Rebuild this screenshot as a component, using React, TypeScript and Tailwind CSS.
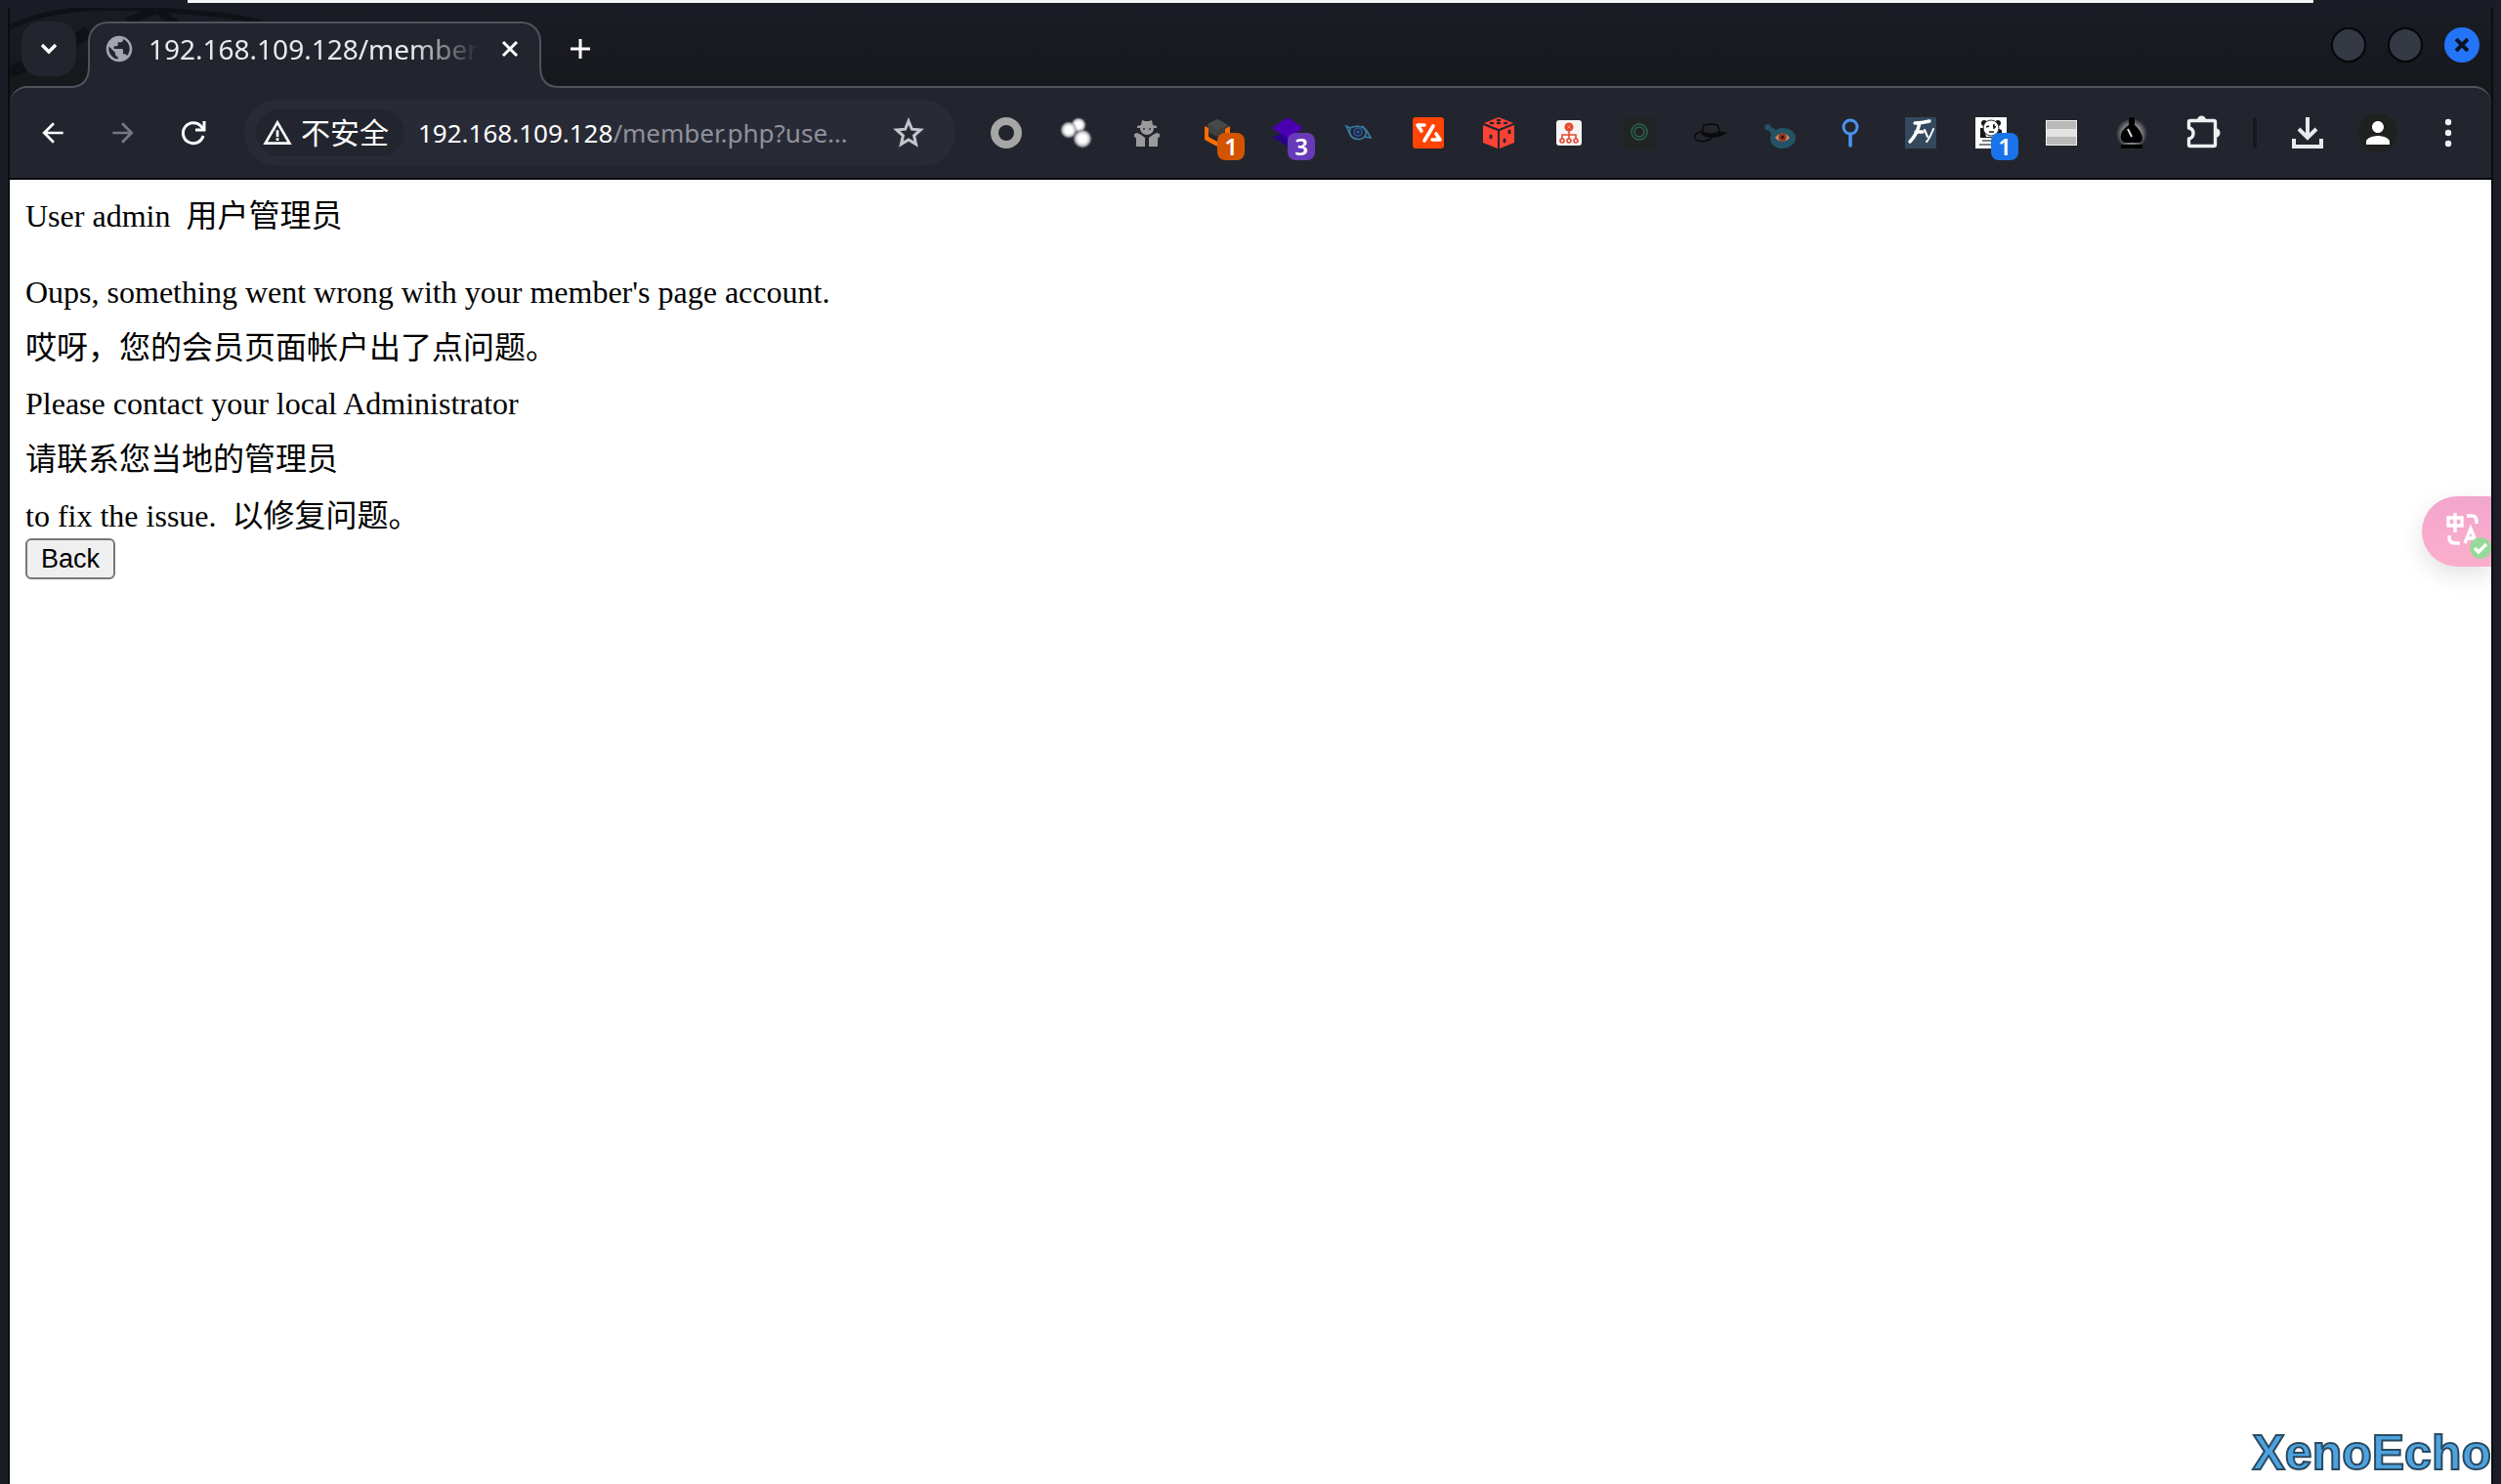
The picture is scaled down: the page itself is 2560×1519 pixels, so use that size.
import { FC, ReactNode } from 'react'
import {
    MdArrowBack,
    MdArrowForward,
    MdPerson,
    MdPublic,
    MdWarningAmber,
} from 'react-icons/md'

type Extension = {
    name: string
    icon: ReactNode
    badge?: string
    badgeClass?: string
}

const extensions: Extension[] = [
    {
        name: 'Ring',
        icon: <circle cx="16" cy="16" r="12" fill="none" stroke="#a6a6a6" strokeWidth="8" />,
    },
    {
        name: 'Bubbles',
        icon: (
            <>
                <defs>
                    <radialGradient id="bubble">
                        <stop offset="0.4" stopColor="#fff" />
                        <stop offset="0.7" stopColor="#c4c5c7" />
                        <stop offset="1" stopColor="#8a8b90" stopOpacity="0.1" />
                    </radialGradient>
                </defs>
                <circle cx="18" cy="8" r="8" fill="url(#bubble)" />
                <circle cx="8" cy="13" r="9" fill="url(#bubble)" />
                <circle cx="22" cy="22" r="10" fill="url(#bubble)" />
            </>
        ),
    },
    {
        name: 'Agent',
        icon: (
            <g fill="#9b9b9b">
                <path d="M11 3l3 1h4l3-1 1 5 4 1v2h-3c0 4-3 7-7 7s-7-3-7-7H6V9l4-1z" />
                <path d="M5 30v-8l-1-2-1 1v-4l3-1 4 2 4 3v9zM27 30v-8l1-2 1 1v-4l-3-1-4 2-4 3v9z" />
                <path d="M12 11h2v2h-2zM18 11h2v2h-2z" fill="#4a4b50" />
            </g>
        ),
    },
    {
        name: 'Cube',
        badge: '1',
        badgeClass: 'bg-[#d35400]',
        icon: (
            <>
                <path d="M16 2l11 6-3 8-8 4-10-5V7z" fill="#3f4040" />
                <path d="M16 2l11 6-11 5-10-6z" fill="#484a49" />
                <path d="M3 9l4 2v9l9 5v5L3 23zM29 9l-5 3v5h5z" fill="#ff6c00" />
            </>
        ),
    },
    {
        name: 'Layers',
        badge: '3',
        badgeClass: 'bg-[#673ab7]',
        icon: (
            <>
                <path d="M4 19l12-3 14 4-14 10L0 20z" fill="#2b0189" />
                <path d="M16 0l16 11-16 11L0 11z" fill="#4a00b0" />
            </>
        ),
    },
    {
        name: 'Eye',
        icon: (
            <g fill="none" stroke="#357ca5" strokeWidth="1.6">
                <path d="M4 9l4 2c5-3 14-2 17 3l4 7-6-1c-4 4-12 3-15-2z" />
                <circle cx="16" cy="15" r="4" stroke="#29569a" />
                <circle cx="16" cy="15" r="1" stroke="#29569a" />
                <path d="M8 11c-2 5 1 10 5 11M20 9c5 3 5 8 3 11" />
            </g>
        ),
    },
    {
        name: 'Code',
        icon: (
            <>
                <rect width="32" height="32" rx="3" fill="#ff4405" />
                <path
                    d="M12 8H5l4 6M21 9L12 24M24 17l4 6h-8"
                    fill="none"
                    stroke="#fff"
                    strokeWidth="3.6"
                    strokeLinejoin="round"
                    strokeLinecap="round"
                />
            </>
        ),
    },
    {
        name: 'Dice',
        icon: (
            <>
                <path d="M16 0l15 6-15 6L1 6zM0 8l15 6v18L0 26zM32 8l-15 6v18l15-6z" fill="#fb4234" />
                <g fill="#23252e">
                    <ellipse cx="16" cy="3" rx="2.4" ry="1.2" />
                    <ellipse cx="9" cy="6" rx="2.4" ry="1.2" />
                    <ellipse cx="16" cy="6" rx="2.4" ry="1.2" />
                    <ellipse cx="23" cy="6" rx="2.4" ry="1.2" />
                    <ellipse cx="8" cy="20" rx="1.6" ry="2.4" />
                    <ellipse cx="27" cy="15" rx="1.6" ry="2.4" />
                    <ellipse cx="22" cy="24" rx="1.6" ry="2.4" />
                </g>
            </>
        ),
    },
    {
        name: 'Sitemap',
        icon: (
            <>
                <rect x="3" y="3" width="26" height="26" rx="3" fill="#f5f5f5" />
                <g fill="none" stroke="#e8472b" strokeWidth="1.6">
                    <circle cx="16" cy="10" r="3.4" strokeWidth="2.4" />
                    <path d="M16 14v8M9 22v-4h14v4M14 10l2-2 2 2-2 2z" />
                    <circle cx="9" cy="24" r="2" />
                    <circle cx="16" cy="24" r="2" />
                    <circle cx="23" cy="24" r="2" />
                </g>
            </>
        ),
    },
    {
        name: 'Target',
        icon: (
            <>
                <rect width="32" height="32" rx="2" fill="#212423" />
                <g fill="none" stroke="#2c6455" strokeWidth="1.4">
                    <circle cx="16" cy="15" r="8" />
                    <circle cx="16" cy="15" r="5" />
                </g>
            </>
        ),
    },
    {
        name: 'Hat',
        icon: (
            <g stroke="#0b0b0d" strokeWidth="1.6">
                <path d="M8 17l2-9c4-1 10-1 14 0l3 8" fill="#24262c" />
                <path d="M8 15c6 3 12 3 18 0l6 1c-4 3-10 4-15 4-4 0-8-1-9-5z" fill="#0b0b0d" />
                <path d="M8 15c-5 0-8 3-7 6 2 5 10 5 18 0" fill="none" />
            </g>
        ),
    },
    {
        name: 'Creature',
        icon: (
            <>
                <path
                    d="M1 8c2-2 5-1 6 2l5 3c6-4 18-2 20 7 1 8-8 12-14 12C9 32 4 25 7 17l-2-3c-3 0-6-3-4-6z"
                    fill="#235365"
                />
                <path d="M11 21c4-6 11-6 15 0-4 5-11 5-15 0z" fill="#c98763" />
                <circle cx="18.5" cy="20.5" r="4" fill="#91321d" />
                <circle cx="18.5" cy="20.5" r="1.4" fill="#1d1210" />
            </>
        ),
    },
    {
        name: 'Pin',
        icon: (
            <g fill="none" stroke="#4a93f0" strokeWidth="3" strokeLinecap="round">
                <circle cx="16" cy="10" r="7" />
                <path d="M16 18v11" strokeWidth="3.6" />
            </g>
        ),
    },
    {
        name: 'Fy',
        icon: (
            <>
                <rect width="32" height="32" fill="#34495e" />
                <g fill="none" stroke="#fff" strokeLinecap="round">
                    <path d="M10 6c5 0 11-1 15-2M15 6C13 14 9 21 5 25M11 15h7" strokeWidth="3.4" />
                    <path d="M20 13l3 7M29 12c-2 5-4 10-7 13" strokeWidth="2" />
                </g>
            </>
        ),
    },
    {
        name: 'Panda',
        badge: '1',
        badgeClass: 'bg-[#1a73e8]',
        icon: (
            <>
                <rect width="32" height="32" fill="#fff" />
                <path d="M5 11h4l2 9h10l3-8 3 1v8H5z" fill="#161616" />
                <circle cx="9" cy="6" r="3" fill="#161616" />
                <circle cx="23" cy="6" r="3" fill="#161616" />
                <ellipse cx="16" cy="11" rx="8" ry="8" fill="#fff" stroke="#333" />
                <path d="M11 10l3-1M18 9l3 1M14 15h5M19 7v5" stroke="#161616" strokeWidth="1.5" />
                <path d="M7 24h10M4 28h16" stroke="#555" strokeWidth="1.5" />
            </>
        ),
    },
    {
        name: 'Stripes',
        icon: (
            <>
                <rect y="3" width="32" height="26" fill="#f2f2f2" />
                <path d="M1 4h30v8H1zM1 20h30v8H1z" fill="#b9b9b9" />
                <path d="M1 12h30v8H1z" fill="#e3e3e3" />
            </>
        ),
    },
    {
        name: 'Chess',
        icon: (
            <>
                <defs>
                    <radialGradient id="halo">
                        <stop offset="0.6" stopColor="#85868a" />
                        <stop offset="1" stopColor="#23252e" />
                    </radialGradient>
                </defs>
                <circle cx="16" cy="17" r="16" fill="url(#halo)" />
                <circle cx="16" cy="3" r="3" fill="#000" />
                <path d="M13 4h6v4c5 4 10 12 7 17l-3 1H9c-3-1-5-4-4-8 1-5 5-8 8-10zM5 28h22v4H5z" fill="#000" />
                <path d="M12 12l4 8" stroke="#ddd" strokeWidth="2" />
            </>
        ),
    },
    {
        name: 'Extensions',
        icon: (
            <>
                <path
                    d="M4 3.5h24q1.5 0 1.5 1.5v23q0 1.5-1.5 1.5H4q-1.5 0-1.5-1.5v-6c6-1 6-10 0-11V5q0-1.5 1.5-1.5z"
                    fill="none"
                    stroke="#eeeff1"
                    strokeWidth="3.4"
                    strokeLinejoin="round"
                />
                <path d="M11 3c0-6 9-6 9 0zM30 11c6 1 6 9 0 10z" fill="#eeeff1" />
            </>
        ),
    },
]

const ExtensionButton: FC<{ extension: Extension }> = ({ extension }) => (
    <button className="relative h-8 w-8 shrink-0" aria-label={extension.name}>
        <svg viewBox="0 0 32 32" className="h-8 w-8 overflow-visible">
            {extension.icon}
        </svg>
        {extension.badge && (
            <span
                className={`absolute top-4 left-4 flex h-7 w-7 items-center justify-center rounded-lg text-[24px] leading-7 font-semibold text-white ${extension.badgeClass}`}
            >
                {extension.badge}
            </span>
        )}
    </button>
)

const TabStrip: FC = () => (
    <div className="relative flex h-20 items-end bg-linear-to-b from-[#1a1c25] to-[#17181c]">
        <svg className="absolute top-0 left-0 h-20 w-72" viewBox="0 0 288 80" fill="none" stroke="#101116">
            <path d="M0 20C40 0 90-2 150 2s90 6 140 22" strokeWidth="5" />
            <path d="M0 66C40 50 60 40 80 24" strokeWidth="12" />
            <path d="M120 14l30-12 20 14" strokeWidth="8" />
        </svg>
        <button
            className="relative mb-[10px] ml-3 flex h-14 w-14 shrink-0 items-center justify-center rounded-[20px] bg-[#23252e] text-white"
            aria-label="Search tabs"
        >
            <svg viewBox="0 0 24 24" className="h-6 w-6" fill="none" stroke="currentColor" strokeWidth="3.4">
                <path d="M5 8l7 7 7-7" />
            </svg>
        </button>
        <div className="relative -mb-[2px] ml-3 flex h-[68px] w-[464px] shrink-0 items-center rounded-t-[20px] border-2 border-b-0 border-[#50525c] bg-[#23252e] pr-[18px] pb-[14px] pl-[14px]">
            <MdPublic className="h-8 w-8 shrink-0 text-[#a3a6b0]" />
            <span className="ml-[14px] shrink-0 mask-r-from-80% mask-r-to-100% text-[28px] leading-10 whitespace-nowrap text-[#e9eaee]">
                192.168.109.128/member
            </span>
            <button className="ml-auto text-white" aria-label="Close tab">
                <svg viewBox="0 0 24 24" className="h-6 w-6" fill="none" stroke="currentColor" strokeWidth="3">
                    <path d="M5 5l14 14M19 5L5 19" />
                </svg>
            </button>
            {/* flared feet of the tab */}
            <svg className="absolute bottom-0 -left-[22px] h-[22px] w-[24px]" viewBox="0 0 24 22">
                <path d="M24 0h-3Q21 21 2 21H0v1h24z" fill="#23252e" />
                <path d="M21 0Q21 21 2 21H0" fill="none" stroke="#50525c" strokeWidth="2" />
            </svg>
            <svg className="absolute -right-[22px] bottom-0 h-[22px] w-[24px]" viewBox="0 0 24 22">
                <path d="M0 0h3Q3 21 22 21h2v1H0z" fill="#23252e" />
                <path d="M3 0Q3 21 22 21h2" fill="none" stroke="#50525c" strokeWidth="2" />
            </svg>
        </div>
        <button className="mb-[22px] ml-6 text-white" aria-label="New tab">
            <svg viewBox="0 0 32 32" className="h-8 w-8" fill="none" stroke="currentColor" strokeWidth="3">
                <path d="M16 6v20M6 16h20" />
            </svg>
        </button>
        <div className="mr-3 mb-6 ml-auto flex gap-[22px]">
            <button className="h-9 w-9 rounded-full border-2 border-[#05060c] bg-[#353944]" aria-label="Minimize" />
            <button className="h-9 w-9 rounded-full border-2 border-[#05060c] bg-[#353944]" aria-label="Maximize" />
            <button
                className="flex h-9 w-9 items-center justify-center rounded-full bg-[#2474f8] text-[#0a1220]"
                aria-label="Close"
            >
                <svg viewBox="0 0 14 14" className="h-[14px] w-[14px]" fill="none" stroke="currentColor" strokeWidth="4">
                    <path d="M1 1l12 12M13 1L1 13" />
                </svg>
            </button>
        </div>
    </div>
)

const Toolbar: FC = () => (
    <div className="flex h-24 items-center rounded-t-[18px] border-t-2 border-b-2 border-t-[#50525c] border-b-[#08090d] bg-[#23252e] px-7">
        <nav className="flex shrink-0 gap-10 text-white">
            <button aria-label="Back">
                <MdArrowBack className="h-8 w-8" />
            </button>
            <button aria-label="Forward" className="text-[#777982]">
                <MdArrowForward className="h-8 w-8" />
            </button>
            <button aria-label="Reload">
                <svg viewBox="0 0 32 32" className="h-8 w-8" fill="none" stroke="currentColor" strokeWidth="3">
                    <path d="M26 19a10.5 10.5 0 1 1-2-9.5l3 3" />
                    <path d="M27 4v9h-9" />
                </svg>
            </button>
        </nav>
        <div className="ml-9 flex h-[68px] w-[728px] shrink-0 items-center rounded-full bg-[#282a35] pr-[30px] pl-3">
            <button className="flex h-12 shrink-0 items-center gap-2 rounded-full bg-[#23252e] pr-4 pl-[6px] text-[30px] leading-10 text-white">
                <MdWarningAmber className="h-8 w-8" />
                <span>不安全</span>
            </button>
            <a href="#" className="ml-[14px] min-w-0 flex-1 truncate text-[26px] leading-10 text-[#8f919b]">
                <span className="text-white">192.168.109.128</span>/member.php?use…
            </a>
            <button className="shrink-0 text-[#c4c5ca]" aria-label="Bookmark this page">
                <svg viewBox="0 0 36 36" className="h-9 w-9" fill="none" stroke="currentColor" strokeWidth="3">
                    <path d="M18 6l3.4 8.200 8.900.8-6.700 5.900 2 8.700-7.600-4.600-7.600 4.600 2-8.700L5.700 15l8.900-.8z" />
                </svg>
            </button>
        </div>
        <div className="ml-9 flex items-center gap-10">
            {extensions.map((extension) => (
                <ExtensionButton key={extension.name} extension={extension} />
            ))}
        </div>
        <div className="ml-auto flex shrink-0 items-center gap-9">
            <span className="h-8 w-1 rounded-full bg-[#17181e]" />
            <button aria-label="Downloads">
                <svg viewBox="0 0 32 32" className="h-8 w-8" fill="none" stroke="#e8e9ec" strokeWidth="4">
                    <path d="M16 0v22M7 12l9 9 9-9M2 22v8h28v-8" />
                </svg>
            </button>
            <button
                className="flex h-10 w-10 items-center justify-center rounded-full bg-[#1f211f] text-white"
                aria-label="Profile"
            >
                <MdPerson className="h-9 w-9" />
            </button>
            <button className="text-[#f1f2f4]" aria-label="Menu">
                <svg viewBox="0 0 32 32" className="h-8 w-8" fill="currentColor">
                    <circle cx="16" cy="5" r="3.2" />
                    <circle cx="16" cy="16" r="3.2" />
                    <circle cx="16" cy="27" r="3.2" />
                </svg>
            </button>
        </div>
    </div>
)

const TranslateButton: FC = () => (
    <button
        className="absolute top-[324px] right-0 h-[72px] w-[71px] rounded-l-full bg-linear-to-b from-[#f3a6cd] to-[#fbaecb] shadow-[0_8px_24px_rgba(0,0,0,0.12)]"
        aria-label="Translate"
    >
        <svg viewBox="1 0 71 72" className="h-[72px] w-[71px]" fill="none" stroke="#fff" strokeWidth="3.4">
            <path d="M28 22h14v8H28zM35 17v20" />
            <path d="M47 20h5q5 0 5 6v2M29 40v2q0 6 6 6h5" />
            <path d="M45 48l6-15 6 15M47 43h8" />
            <circle cx="61" cy="53" r="11" fill="#97d998" stroke="none" />
            <path d="M55 53l4 4 8-8" />
        </svg>
    </button>
)

const MemberPage: FC = () => (
    <main className="relative flex-1 overflow-hidden bg-white px-4 pt-[14px] font-['Liberation_Serif','Noto_Sans_CJK_SC',serif] text-[32px] leading-[46px] text-black">
        <p className="mb-8">User admin&nbsp;&nbsp;用户管理员</p>
        <div className="mb-3 flex flex-col gap-[11px]">
            <p>Oups, something went wrong with your member's page account.</p>
            <p>哎呀，您的会员页面帐户出了点问题。</p>
            <p>Please contact your local Administrator</p>
            <p>请联系您当地的管理员</p>
        </div>
        <p>to fix the issue.&nbsp;&nbsp;以修复问题。</p>
        <button className="block h-[42px] rounded-md border-2 border-[#767676] bg-[#efefef] px-[14px] font-['Liberation_Sans',sans-serif] text-[27px] leading-[38px]">
            Back
        </button>
        <TranslateButton />
        <span className="absolute right-0 bottom-1 font-['Liberation_Sans',sans-serif] text-[50px] leading-14 font-bold text-[#4da3e0] [-webkit-text-stroke:2px_#2c4a60]">
            XenoEcho
        </span>
    </main>
)

const App: FC = () => (
    <div className="relative flex min-h-screen flex-col border-x-8 border-t-8 border-[#1b1d26] bg-[#17181c] font-['Noto_Sans','Noto_Sans_CJK_SC',sans-serif]">
        <div className="absolute -top-2 right-[184px] left-[184px] h-[3px] bg-[#f4f4f4]" />
        <div className="flex flex-1 flex-col border-x-2 border-[#0b0c11]">
            <TabStrip />
            <Toolbar />
            <MemberPage />
        </div>
    </div>
)

export default App
